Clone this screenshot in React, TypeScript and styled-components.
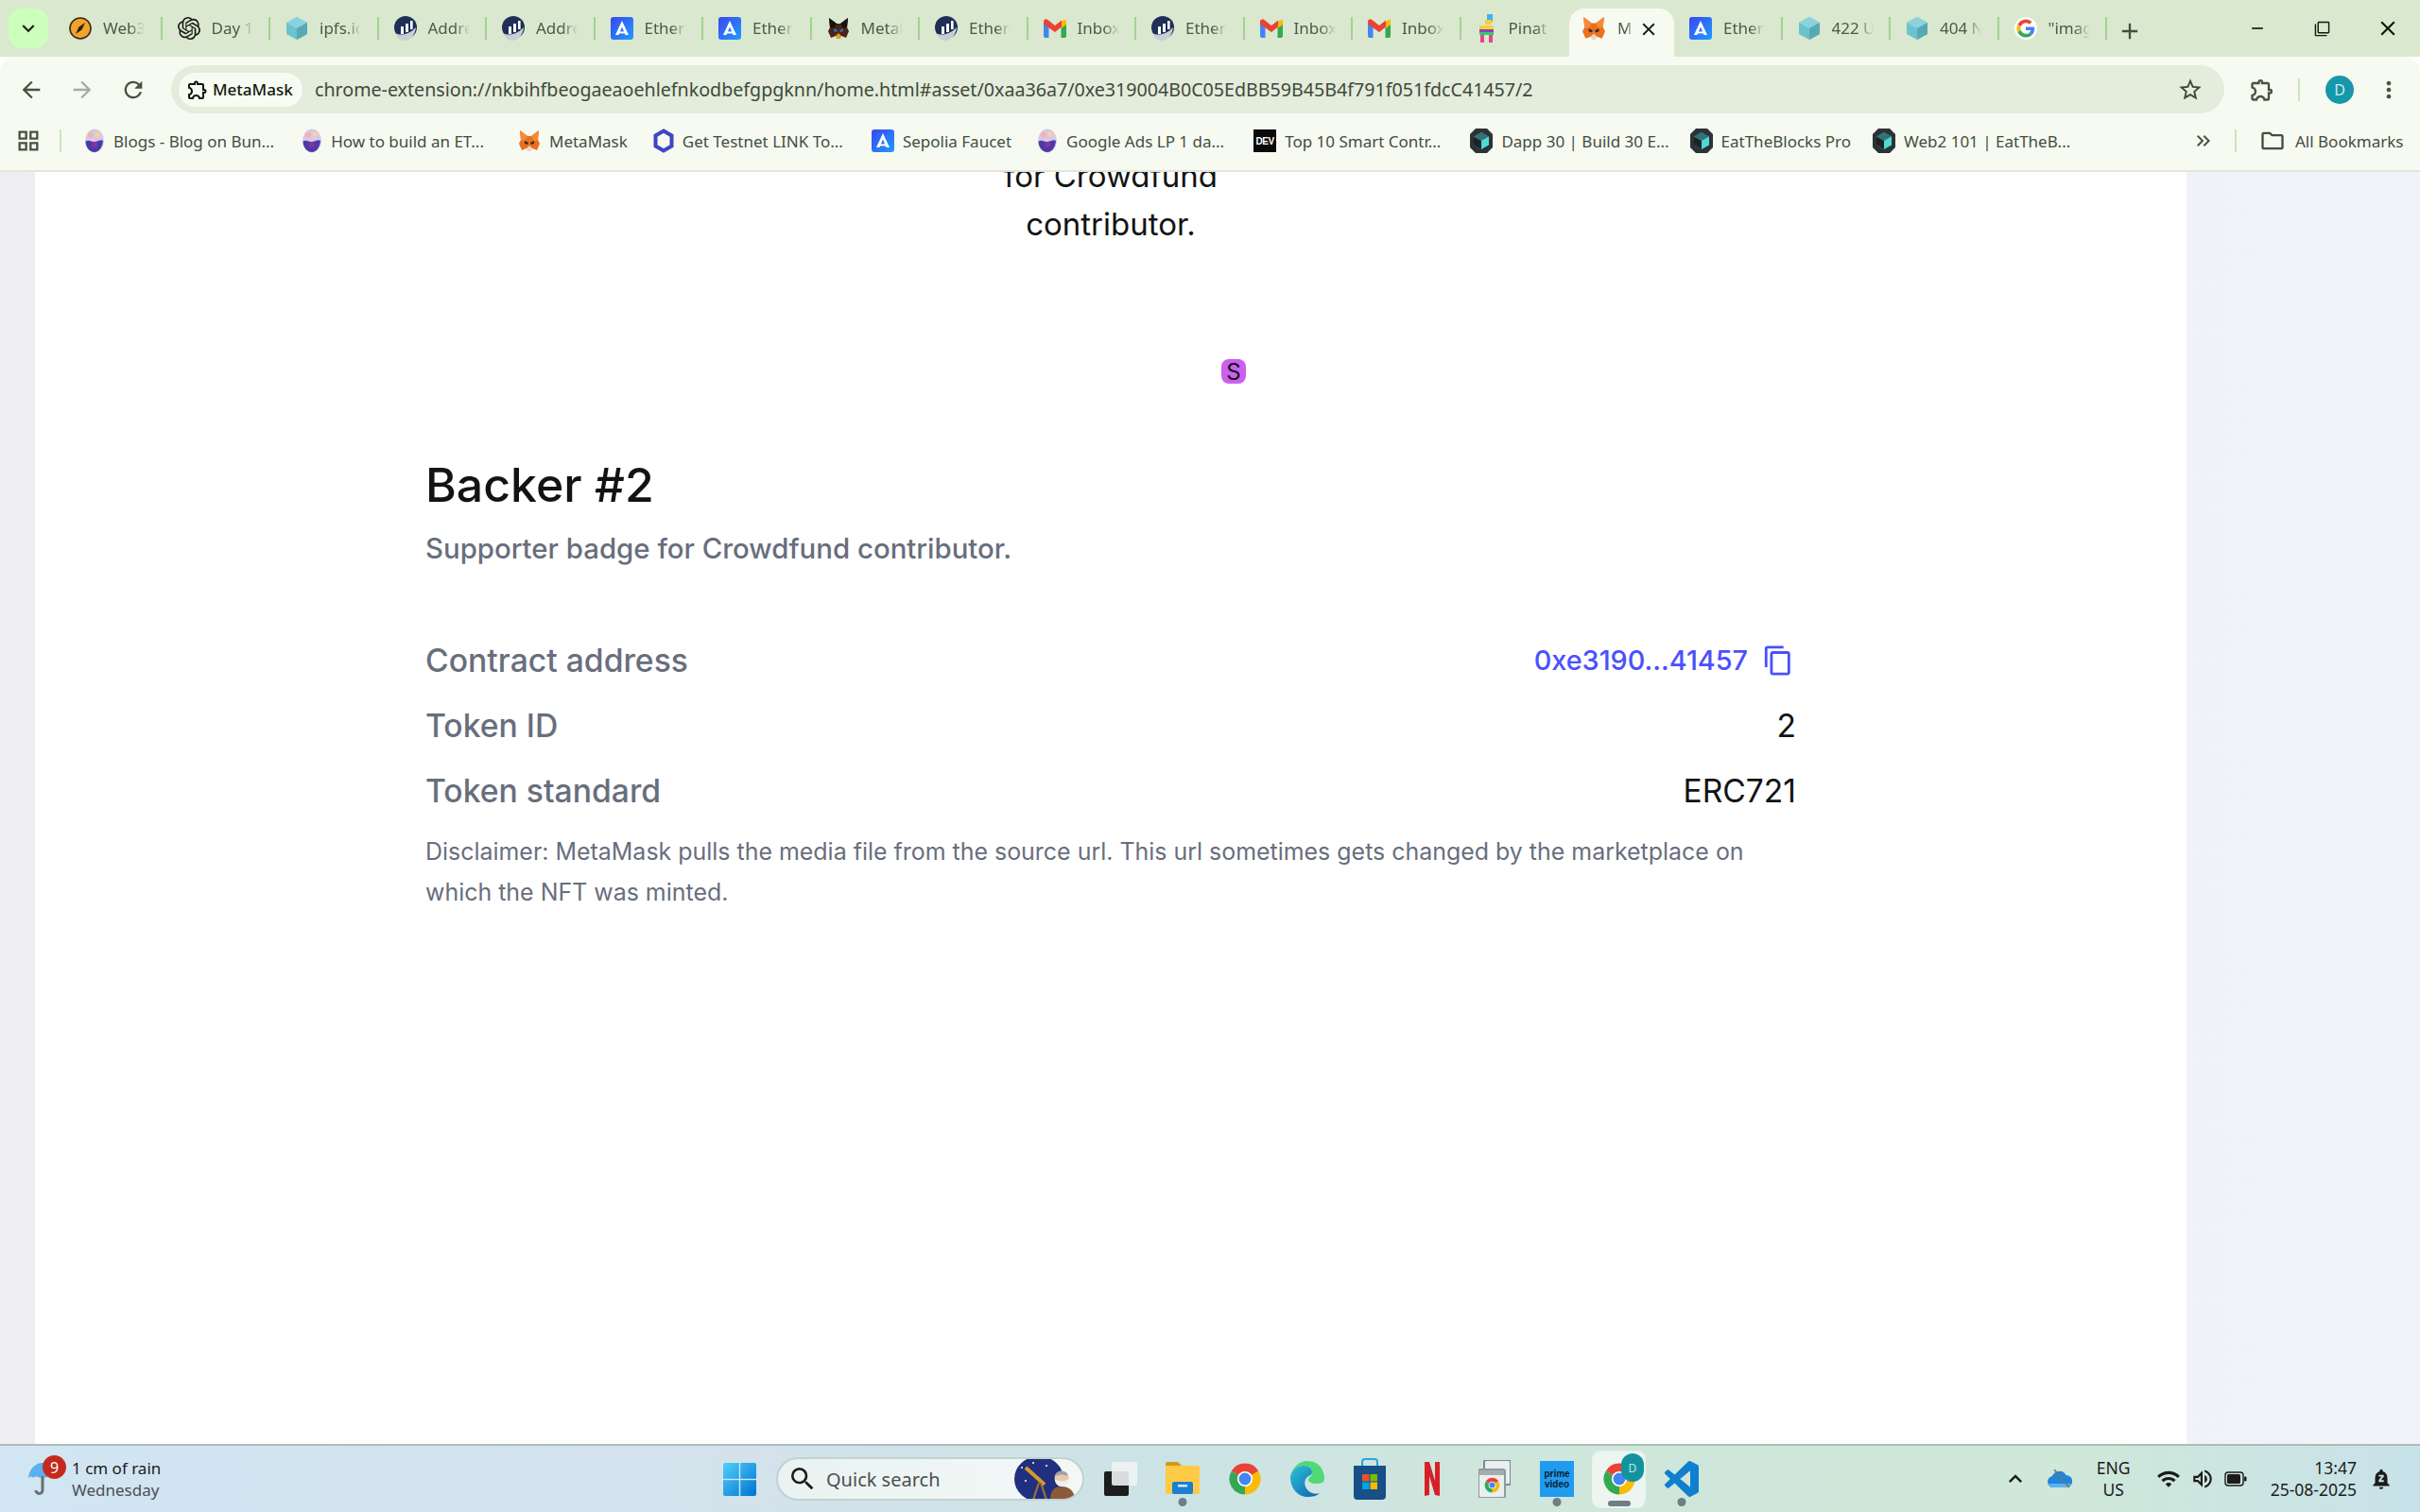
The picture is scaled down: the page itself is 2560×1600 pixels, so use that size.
import React from "react";
import styled, { createGlobalStyle } from "styled-components";
import {
  MdArrowBack,
  MdArrowForward,
  MdRefresh,
  MdStarBorder,
  MdOutlineExtension,
  MdMoreVert,
  MdOutlineContentCopy,
  MdNotificationsPaused,
  MdOutlineFolder,
  MdOutlineGridView,
  MdKeyboardDoubleArrowRight,
  MdKeyboardArrowDown,
  MdKeyboardArrowUp,
  MdAdd,
  MdClose,
  MdRemove,
  MdFilterNone,
  MdOutlineWifi,
  MdOutlineVolumeUp,
  MdSearch,
} from "react-icons/md";
import { SiOpenai } from "react-icons/si";

const GlobalStyle = createGlobalStyle`
  html, body {
    margin: 0;
    padding: 0;
    background: #ffffff;
  }
  * {
    box-sizing: border-box;
  }
`;

const Screen = styled.div`
  width: 2560px;
  height: 1600px;
  display: flex;
  flex-direction: column;
  overflow: hidden;
  font-family: "Noto Sans", sans-serif;
`;

/* ---------- tab strip ---------- */

const TabStrip = styled.div`
  height: 60px;
  flex: none;
  display: flex;
  align-items: flex-end;
  background: #d9e8cf;
  padding-left: 9px;
`;

const TabSearch = styled.div`
  width: 42px;
  height: 42px;
  margin: 0 6px 9px 0;
  border-radius: 14px;
  background: #ccffbb;
  color: #16200f;
  display: flex;
  align-items: center;
  justify-content: center;
`;

const Tab = styled.div<{ $active?: boolean; $sep?: boolean }>`
  width: ${({ $active }) => ($active ? "111px" : "114.5px")};
  height: 51px;
  flex: none;
  display: flex;
  align-items: center;
  gap: 12px;
  padding: 0 0 9px ${({ $active }) => ($active ? "13px" : "16px")};
  position: relative;
  border-radius: 16px 16px 0 0;
  background: ${({ $active }) => ($active ? "#f7faf1" : "transparent")};
  &::after {
    content: "";
    display: ${({ $active }) => ($active ? "none" : "block")};
    position: absolute;
    right: 0;
    top: 9px;
    width: 2px;
    height: 24px;
    background: ${({ $sep }) => ($sep === false ? "transparent" : "#a0d48d")};
  }
`;

const TabTitle = styled.span<{ $active?: boolean }>`
  width: ${({ $active }) => ($active ? "17px" : "46px")};
  white-space: nowrap;
  font-size: 17px;
  line-height: 24px;
  color: #4b5a47;
  -webkit-mask-image: linear-gradient(90deg, #000 60%, transparent 96%);
  mask-image: linear-gradient(90deg, #000 60%, transparent 96%);
`;

const TabClose = styled.span`
  position: absolute;
  right: 16px;
  top: 11px;
  color: #10170c;
  display: flex;
`;

const NewTab = styled.div`
  margin: 0 0 13px 10px;
  height: 28px;
  color: #43523f;
  display: flex;
`;

const WindowControls = styled.div`
  margin-left: auto;
  align-self: stretch;
  display: flex;
  color: #10170c;
`;

const WindowButton = styled.span`
  width: 69px;
  display: flex;
  align-items: center;
  justify-content: center;
`;

/* ---------- toolbar ---------- */

const Toolbar = styled.div`
  height: 60px;
  flex: none;
  display: flex;
  align-items: center;
  background: #f7faf1;
  border-radius: 16px 16px 0 0;
  padding-top: 9px;
`;

const NavButton = styled.div<{ $dim?: boolean }>`
  width: 54px;
  flex: none;
  display: flex;
  justify-content: center;
  color: ${({ $dim }) => ($dim ? "#a3ada0" : "#45533f")};
`;

const NavGroup = styled.div`
  display: flex;
  padding-left: 6px;
  width: 181px;
  flex: none;
`;

const Omnibox = styled.div`
  width: 2172px;
  height: 51px;
  flex: none;
  display: flex;
  align-items: center;
  border-radius: 26px;
  background: #e4ecdc;
  padding: 0 22px 0 8px;
`;

const SiteChip = styled.div`
  width: 131px;
  height: 36px;
  flex: none;
  display: flex;
  align-items: center;
  gap: 4px;
  padding-left: 8px;
  border-radius: 18px;
  background: #f8fbf2;
  font-size: 17px;
  font-weight: 500;
  color: #10170c;
`;

const UrlText = styled.span`
  margin-left: 13px;
  font-size: 19.65px;
  color: #3d4a39;
  white-space: nowrap;
`;

const StarSlot = styled.span`
  margin-left: auto;
  display: flex;
  color: #3b4937;
`;

const ExtSlot = styled.span`
  margin-left: 26px;
  display: flex;
  color: #45533f;
`;

const VSep = styled.span`
  width: 2px;
  height: 24px;
  flex: none;
  background: #c9e6bb;
`;

const ToolbarSep = styled(VSep)`
  margin-left: 24px;
`;

const Avatar = styled.span`
  width: 30px;
  height: 30px;
  margin-left: 27px;
  flex: none;
  border-radius: 50%;
  background: #1798aa;
  color: #cdeaf0;
  font-size: 16px;
  display: flex;
  align-items: center;
  justify-content: center;
`;

const MoreSlot = styled.span`
  margin-left: 23px;
  display: flex;
  color: #45533f;
`;

/* ---------- bookmarks ---------- */

const BookmarksBar = styled.div`
  height: 62px;
  flex: none;
  display: flex;
  align-items: center;
  background: #f7faf1;
  border-bottom: 2px solid #e1e5da;
  padding: 0 0 2px 16px;
  color: #45533f;
`;

const AppsSlot = styled.span`
  display: flex;
  width: 30px;
  color: #45533f;
`;

const BarSep = styled(VSep)`
  margin: 0 22px 0 17px;
`;

const BookmarkList = styled.div`
  display: flex;
  align-items: center;
  width: 2212px;
  flex: none;
`;

const Bookmark = styled.div<{ $lead?: number }>`
  display: flex;
  align-items: center;
  gap: 9px;
  margin-left: ${({ $lead }) => $lead ?? 0}px;
  font-size: 17px;
  color: #414e3d;
  white-space: nowrap;
`;

const OverflowSlot = styled.span`
  display: flex;
  margin-left: 20px;
  color: #45533f;
`;

const BarSepRight = styled(VSep)`
  margin: 0 24px 0 21px;
`;

const AllBookmarks = styled(Bookmark)`
  gap: 10px;
`;

const DevLogo = styled.span`
  width: 24px;
  height: 24px;
  flex: none;
  background: #0a0a0a;
  color: #ffffff;
  font-size: 10px;
  font-weight: 700;
  letter-spacing: -0.5px;
  display: flex;
  align-items: center;
  justify-content: center;
  font-family: "Liberation Sans", sans-serif;
`;

/* ---------- page ---------- */

const Viewport = styled.main`
  flex: 1;
  min-height: 0;
  display: flex;
  padding-left: 37px;
  overflow: hidden;
  background: linear-gradient(90deg, #eeeef2, #f1f3f8);
`;

const Panel = styled.div`
  width: 2276px;
  background: #ffffff;
  font-family: Inter, sans-serif;
`;

const Caption = styled.div`
  width: 300px;
  margin: -21px auto 0;
  font-size: 33px;
  line-height: 51px;
  text-align: center;
  color: #121314;
`;

const Details = styled.section`
  width: 1450px;
  margin: 0 auto;
`;

const BadgeRow = styled.div`
  margin-top: 117px;
  padding-left: 842px;
`;

const FallbackBadge = styled.span`
  width: 26px;
  height: 26px;
  border-radius: 8px;
  background: #cc5ff0;
  color: #121314;
  font-size: 24px;
  display: flex;
  align-items: center;
  justify-content: center;
`;

const Title = styled.h1`
  margin: 77px 0 0;
  font-size: 50px;
  line-height: 60px;
  font-weight: 500;
  color: #121314;
`;

const Subtitle = styled.p`
  margin: 18px 0 0;
  font-size: 29.4px;
  line-height: 40px;
  font-weight: 500;
  color: #686e7d;
`;

const Rows = styled.div`
  margin-top: 63px;
  display: flex;
  flex-direction: column;
`;

const Row = styled.div`
  height: 69px;
  display: flex;
  align-items: center;
  justify-content: space-between;
`;

const RowLabel = styled.span`
  font-size: 33.7px;
  font-weight: 500;
  color: #686e7d;
`;

const RowValue = styled.span`
  font-size: 33.6px;
  font-weight: 400;
  color: #121314;
`;

const AddressLink = styled.span`
  display: flex;
  align-items: center;
  gap: 15px;
  padding-right: 2px;
  font-size: 28.8px;
  font-weight: 500;
  color: #4a50ff;
`;

const Disclaimer = styled.p`
  margin: 9px 0 0;
  font-size: 24.95px;
  line-height: 43px;
  color: #686e7d;
`;

/* ---------- taskbar ---------- */

const Taskbar = styled.footer`
  height: 72px;
  flex: none;
  display: grid;
  grid-template-columns: 765px 1fr auto;
  align-items: center;
  border-top: 2px solid #adbcb9;
  background: linear-gradient(
    90deg,
    #d1e5f3 0%,
    #d4e2ec 30%,
    #cce3e6 48%,
    #cfe6dc 62%,
    #cfe8d8 85%,
    #c8e2ea 100%
  );
`;

const Weather = styled.div`
  display: flex;
  align-items: center;
  gap: 16px;
  padding-left: 30px;
`;

const WeatherIcon = styled.div`
  position: relative;
  width: 30px;
  height: 44px;
`;

const NoticeBadge = styled.span`
  position: absolute;
  left: 15px;
  top: -3px;
  width: 25px;
  height: 25px;
  border-radius: 50%;
  background: #c42b1c;
  color: #ffffff;
  font-size: 16px;
  display: flex;
  align-items: center;
  justify-content: center;
`;

const WeatherText = styled.div`
  display: flex;
  flex-direction: column;
  font-size: 17px;
  line-height: 23px;
  color: #1b1b1b;
`;

const MutedLine = styled.span`
  color: #4a4f52;
`;

const Dock = styled.div`
  display: flex;
  align-items: center;
`;

const SearchPill = styled.div`
  width: 326px;
  height: 46px;
  margin-left: 21px;
  margin-right: 5px;
  display: flex;
  align-items: center;
  gap: 9px;
  padding-left: 10px;
  border-radius: 23px;
  border: 2px solid #c3d1cf;
  background: linear-gradient(90deg, #e9f3f1, #f3f8f7);
  font-size: 20px;
  color: #4d4f50;
  overflow: hidden;
`;

const SearchThumb = styled.span`
  margin-left: auto;
  display: flex;
  margin-right: 6px;
`;

const DockSlot = styled.div<{ $active?: boolean; $running?: boolean }>`
  width: 66px;
  height: 70px;
  flex: none;
  display: flex;
  align-items: center;
  justify-content: center;
  position: relative;
  &::before {
    content: "";
    display: ${({ $active }) => ($active ? "block" : "none")};
    position: absolute;
    left: 5px;
    right: 6px;
    top: 6px;
    bottom: 5px;
    border-radius: 8px;
    background: rgba(255, 255, 255, 0.6);
    box-shadow: 0 0 0 1px rgba(255, 255, 255, 0.5);
  }
  &::after {
    content: "";
    display: ${({ $running, $active }) => ($running || $active ? "block" : "none")};
    position: absolute;
    bottom: 6px;
    left: 50%;
    transform: translateX(-50%);
    width: ${({ $active }) => ($active ? "24px" : "9px")};
    height: ${({ $active }) => ($active ? "6px" : "9px")};
    border-radius: 5px;
    background: #6f7d85;
  }
  & > * {
    position: relative;
  }
`;

const PrimeTile = styled.span`
  width: 36px;
  height: 38px;
  background: #1f9bf0;
  color: #0d1b2a;
  font-size: 10px;
  font-weight: 700;
  line-height: 11px;
  text-align: center;
  display: flex;
  flex-direction: column;
  justify-content: center;
  font-family: "Liberation Sans", sans-serif;
`;

const AvatarBubble = styled.span`
  position: absolute !important;
  right: 7px;
  top: 8px;
  width: 24px;
  height: 30px;
  border-radius: 12px;
  background: #12939f;
  color: #bfe6ea;
  font-size: 12px;
  display: flex;
  align-items: center;
  justify-content: center;
`;

const Tray = styled.div`
  display: flex;
  align-items: center;
  color: #1b1b1b;
  padding-right: 28px;
`;

const TrayIcon = styled.span<{ $gap: number }>`
  display: flex;
  margin-left: ${({ $gap }) => $gap}px;
`;

const LangBlock = styled.div`
  margin-left: 19px;
  width: 50px;
  text-align: center;
  font-size: 17.5px;
  line-height: 23px;
`;

const Clock = styled.div`
  margin-left: 25px;
  text-align: right;
  font-size: 17.5px;
  line-height: 23px;
`;

/* ---------- little drawings ---------- */

const Fox = ({ size = 24, dark = false }: { size?: number; dark?: boolean }) => (
  <svg width={size} height={size} viewBox="0 0 24 24">
    <polygon points="2,1 10,7 14,7 22,1 21,11 23,15 20,22 15,20 9,20 4,22 1,15 3,11" fill={dark ? "#4a2417" : "#e8701f"} />
    <polygon points="7,12 11,14 10,16 7,15" fill={dark ? "#2f6fbf" : "#3a2a1e"} />
    <polygon points="17,12 13,14 14,16 17,15" fill={dark ? "#2f6fbf" : "#3a2a1e"} />
    <polygon points="9,20 12,17 15,20 14,23 10,23" fill={dark ? "#d7a21f" : "#e9d7c5"} />
    <polygon points="2,1 10,7 7,12 3,11" fill={dark ? "#18120f" : "#f58a3a"} />
    <polygon points="22,1 14,7 17,12 21,11" fill={dark ? "#18120f" : "#f58a3a"} />
  </svg>
);

const Compass = () => (
  <svg width="24" height="24" viewBox="0 0 24 24">
    <circle cx="12" cy="12" r="11" fill="#f2a32c" stroke="#3a2a14" strokeWidth="1.6" />
    <polygon points="17,6 13.5,13.5 7,18 10.5,10.5" fill="#2a2118" />
  </svg>
);

const Cube = ({ tone = "#6cc3cf" }: { tone?: string }) => (
  <svg width="24" height="26" viewBox="0 0 24 26">
    <polygon points="12,1 23,7 23,19 12,25 1,19 1,7" fill={tone} />
    <polygon points="12,1 23,7 12,13 1,7" fill="#8bd3dc" />
    <polygon points="12,13 23,7 23,19 12,25" fill="#57a9b6" />
  </svg>
);

const ChartGlobe = () => (
  <svg width="24" height="26" viewBox="0 0 24 26">
    <circle cx="12" cy="12" r="12" fill="#1f2f57" />
    <path d="M1 18c6 3 14 2 22-6-1 9-7 14-12 14-4 0-8-3-10-8z" fill="#c8ced6" />
    <rect x="7" y="11" width="3" height="8" fill="#ffffff" />
    <rect x="12" y="8" width="3" height="9" fill="#ffffff" />
    <rect x="17" y="5" width="2.6" height="9" fill="#ffffff" />
  </svg>
);

const BlueA = ({ size = 24 }: { size?: number }) => (
  <svg width={size} height={size} viewBox="0 0 24 24">
    <defs>
      <linearGradient id="blueA" x1="0" y1="0" x2="1" y2="1">
        <stop offset="0" stopColor="#3c46f0" />
        <stop offset="1" stopColor="#1e9cff" />
      </linearGradient>
    </defs>
    <rect width="24" height="24" rx="3" fill="url(#blueA)" />
    <path d="M12 4l7 15h-3.4L12 10.6 8.4 19H5z" fill="#ffffff" />
    <rect x="8" y="15.4" width="8" height="2" fill="#ffffff" />
  </svg>
);

const Gmail = () => (
  <svg width="24" height="20" viewBox="0 0 24 20">
    <path d="M0 3v15a2 2 0 0 0 2 2h3.5V8.5z" fill="#4285f4" />
    <path d="M24 3v15a2 2 0 0 1-2 2h-3.5V8.5z" fill="#34a853" />
    <path d="M18.5 2.5L24 0.5V6l-5.5 4z" fill="#fbbc04" />
    <path d="M0 3c0-2.5 2.6-3.6 4.5-2L12 7l7-5.5 0 7L12 14 0 5.5z" fill="#ea4335" />
  </svg>
);

const Pinata = () => (
  <svg width="22" height="32" viewBox="0 0 22 32">
    <rect x="11" y="1" width="6" height="8" fill="#3db4f2" />
    <rect x="9" y="7" width="7" height="5" fill="#f4d03f" />
    <rect x="3" y="13" width="15" height="4" fill="#f4d03f" />
    <rect x="3" y="17" width="15" height="3" fill="#8e44ad" />
    <rect x="3" y="20" width="15" height="3" fill="#2ecc71" />
    <rect x="4" y="23" width="4" height="8" fill="#e84393" />
    <rect x="13" y="23" width="4" height="8" fill="#e84393" />
  </svg>
);

const GoogleG = () => (
  <svg width="24" height="24" viewBox="-6 -6 60 60">
    <circle cx="24" cy="24" r="30" fill="#ffffff" />
    <path fill="#EA4335" d="M24 9.5c3.54 0 6.71 1.22 9.21 3.6l6.85-6.85C35.9 2.38 30.47 0 24 0 14.62 0 6.51 5.38 2.56 13.22l7.98 6.19C12.43 13.72 17.74 9.5 24 9.5z" />
    <path fill="#4285F4" d="M46.98 24.55c0-1.57-.15-3.09-.38-4.55H24v9.02h12.94c-.58 2.96-2.26 5.48-4.78 7.18l7.73 6c4.51-4.18 7.09-10.36 7.09-17.65z" />
    <path fill="#FBBC05" d="M10.53 28.59c-.48-1.45-.76-2.99-.76-4.59s.27-3.14.76-4.59l-7.98-6.19C.92 16.46 0 20.12 0 24c0 3.88.92 7.54 2.56 10.78l7.97-6.19z" />
    <path fill="#34A853" d="M24 48c6.48 0 11.93-2.13 15.89-5.81l-7.73-6c-2.15 1.45-4.92 2.3-8.16 2.3-6.26 0-11.57-4.22-13.47-9.91l-7.98 6.19C6.51 42.62 14.62 48 24 48z" />
  </svg>
);

const Opal = () => (
  <svg width="22" height="26" viewBox="0 0 22 26">
    <ellipse cx="11" cy="13" rx="10" ry="12.5" fill="#d8c7e6" />
    <path d="M1.5 14c4-3 6 1 10 0s6-3 8.5-1c-.5 7-4.500 12-9 12S2 21 1.500 14z" fill="#4a3ba8" />
    <circle cx="7" cy="7" r="3" fill="#f0b3b3" />
    <circle cx="14" cy="6" r="2.500" fill="#f2d98a" />
    <circle cx="11" cy="17" r="3" fill="#8e2f9e" />
  </svg>
);

const ChainHex = () => (
  <svg width="22" height="26" viewBox="0 0 22 26">
    <polygon points="11,2.500 19.500,7.500 19.500,18.500 11,23.500 2.500,18.500 2.500,7.500" fill="none" stroke="#3f46c4" strokeWidth="4" />
  </svg>
);

const BlocksHex = () => (
  <svg width="24" height="28" viewBox="0 0 24 28">
    <path d="M6 1h12l6 6v14l-6 6H6l-6-6V7z" fill="#2c3236" />
    <polygon points="12,5 20,9.500 20,18.500 12,23 4,18.500 4,9.500" fill="#4fd8d8" />
    <polygon points="12,14 20,9.500 12,5 4,9.500" fill="#1c2226" opacity="0.55" />
    <polygon points="12,14 12,23 4,18.500 4,9.500" fill="#1c2226" />
  </svg>
);

const ChromeLogo = ({ size = 36 }: { size?: number }) => (
  <svg width={size} height={size} viewBox="0 0 24 24">
    <path fill="#EA4335" d="M12 12 L2.47 6.500 A11 11 0 0 1 21.530 6.500 Z" />
    <path fill="#FBBC05" d="M12 12 L21.530 6.500 A11 11 0 0 1 12 23 Z" />
    <path fill="#34A853" d="M12 12 L12 23 A11 11 0 0 1 2.470 6.500 Z" />
    <circle cx="12" cy="12" r="5.400" fill="#ffffff" />
    <circle cx="12" cy="12" r="4.300" fill="#4285F4" />
  </svg>
);

const WindowsLogo = () => (
  <svg width="35" height="35" viewBox="0 0 35 35">
    <defs>
      <linearGradient id="winLogo" x1="0" y1="0" x2="1" y2="1">
        <stop offset="0" stopColor="#4fd0fb" />
        <stop offset="1" stopColor="#0072d0" />
      </linearGradient>
    </defs>
    <rect width="35" height="35" rx="2" fill="url(#winLogo)" />
    <rect x="16.800" width="1.400" height="35" fill="#d3e5ee" />
    <rect y="16.800" width="35" height="1.400" fill="#d3e5ee" />
  </svg>
);

const TaskView = () => (
  <svg width="37" height="36" viewBox="0 0 37 36">
    <rect x="1" y="10" width="26" height="26" rx="2" fill="#1d1d1d" />
    <rect x="9" y="0" width="27" height="25" rx="2" fill="#f0f3f3" opacity="0.9" />
  </svg>
);

const FolderLogo = () => (
  <svg width="36" height="36" viewBox="0 0 36 36">
    <path d="M0 2a2 2 0 0 1 2-2h11l4 4h-17z" fill="#d39a16" />
    <rect y="4" width="36" height="30" rx="1.500" fill="#ffcb47" />
    <rect x="7" y="21" width="22" height="13" rx="2" fill="#1d7fd1" />
    <rect x="13" y="24" width="10" height="2.500" fill="#cfe8fa" />
  </svg>
);

const EdgeLogo = () => (
  <svg width="36" height="38" viewBox="0 0 36 38">
    <defs>
      <linearGradient id="edgeA" x1="0" y1="0" x2="1" y2="1">
        <stop offset="0" stopColor="#2bc4d8" />
        <stop offset="1" stopColor="#0f5fb0" />
      </linearGradient>
    </defs>
    <path d="M18 0C30 0 36 9 36 19c0 3-3 5-8 5-6 0-9-2-9-4 0-3 4-3 4-8 0-4-4-7-9-7C7 5 1 10 0 16 2 7 9 0 18 0z" fill="#4fd977" />
    <path d="M0 17C1 9 8 5 14 5c5 0 9 3 9 7 0 3-3 3-6 6-4 5-1 13 6 16 3 1 6 1 8 0-3 3-8 4-13 4C8 38 0 29 0 17z" fill="url(#edgeA)" />
  </svg>
);

const StoreLogo = () => (
  <svg width="36" height="44" viewBox="0 0 36 44">
    <path d="M10 8V4a3 3 0 0 1 3-3h10a3 3 0 0 1 3 3v4" fill="none" stroke="#23a7e0" strokeWidth="2" />
    <path d="M1 8h34v32a4 4 0 0 1-4 4H5a4 4 0 0 1-4-4z" fill="#174f87" />
    <rect x="10" y="17" width="7.500" height="7.500" fill="#e8532b" />
    <rect x="18.500" y="17" width="7.500" height="7.500" fill="#7fba00" />
    <rect x="10" y="25.500" width="7.500" height="7.500" fill="#00a4ef" />
    <rect x="18.500" y="25.500" width="7.500" height="7.500" fill="#ffb900" />
  </svg>
);

const NetflixLogo = () => (
  <svg width="16" height="36" viewBox="0 0 16 36">
    <path d="M0 0h5l6 20V0h5v36l-5-1L5 15v20l-5 1z" fill="#d81f26" />
  </svg>
);

const SnapLogo = () => (
  <svg width="34" height="40" viewBox="0 0 34 40">
    <rect x="6" y="0" width="28" height="26" rx="2" fill="#e9eef0" stroke="#7d8a8f" strokeWidth="2" />
    <rect x="0" y="10" width="28" height="30" rx="2" fill="#e9eef0" stroke="#8f9a9e" strokeWidth="2" />
    <rect x="1" y="11" width="26" height="5" fill="#a4aeb2" />
    <g transform="translate(6 18)">
      <ChromeLogo size={17} />
    </g>
  </svg>
);

const VsCodeLogo = () => (
  <svg width="36" height="38" viewBox="0 0 24 24" preserveAspectRatio="none">
    <path
      fill="#0f7fcf"
      d="M23.15 2.587L18.21.21a1.494 1.494 0 0 0-1.705.29l-9.46 8.63-4.12-3.128a.999.999 0 0 0-1.276.057L.327 7.261A1 1 0 0 0 .326 8.74L3.899 12 .326 15.26a1 1 0 0 0 .001 1.479L1.65 17.94a.999.999 0 0 0 1.276.057l4.12-3.128 9.46 8.63a1.492 1.492 0 0 0 1.704.29l4.942-2.377A1.5 1.500 0 0 0 24 20.060V3.939a1.500 1.500 0 0 0-.85-1.352zm-5.146 14.861L10.826 12l7.178-5.448v10.896z"
    />
  </svg>
);

const Umbrella = () => (
  <svg width="30" height="40" viewBox="0 0 30 40">
    <path d="M0 21C1 11 8 5 15 5s14 6 15 16c-2-2-4-2-5 0-2-2-5-2-7 0-2-2-4-2-6 0-2-2-5-2-7 0-1-2-3-2-5 0z" fill="#5ab0f0" />
    <path d="M15 19v15a3.500 3.500 0 0 1-7 0" fill="none" stroke="#6b6f73" strokeWidth="3" />
  </svg>
);

const SearchPicture = () => (
  <svg width="70" height="44" viewBox="0 0 70 44">
    <ellipse cx="30" cy="22" rx="26" ry="24" fill="#20307f" />
    <circle cx="12" cy="10" r="1" fill="#ffffff" />
    <circle cx="24" cy="5" r="1" fill="#ffffff" />
    <circle cx="38" cy="8" r="1" fill="#ffffff" />
    <circle cx="16" cy="24" r="1" fill="#ffffff" />
    <path d="M16 10L36 28" stroke="#d69a2c" strokeWidth="4" />
    <path d="M30 26l-6 18M32 26l6 18" stroke="#a8742a" strokeWidth="2" />
    <path d="M42 44c0-9 4-14 12-14s14 5 14 14z" fill="#8a5a3a" />
    <circle cx="54" cy="21" r="7.500" fill="#e8c8a8" />
    <path d="M47 24c2 8 12 8 14 0v-2c-3 3-11 3-14 0z" fill="#eceff2" />
    <path d="M47 19c1-7 13-7 14 0-4-2-10-2-14 0z" fill="#9aa0a6" />
  </svg>
);

const Cloud = () => (
  <svg width="26" height="20" viewBox="0 0 26 20">
    <path d="M6 19a6 6 0 0 1-1-11.900A8 8 0 0 1 19.500 6 6.500 6.500 0 0 1 20 19z" fill="#1f86d8" />
    <path d="M1 15a6 6 0 0 0 5 4h14a6 6 0 0 0 5-4z" fill="#5cb1ee" />
    <path d="M7 0L23 19" stroke="#6e7478" strokeWidth="1.600" />
  </svg>
);

const Battery = () => (
  <svg width="24" height="16" viewBox="0 0 24 16">
    <rect x="1" y="1" width="19" height="14" rx="3" fill="none" stroke="#1b1b1b" strokeWidth="1.400" />
    <rect x="3" y="3" width="14" height="10" rx="1.500" fill="#1b1b1b" />
    <rect x="21" y="5.500" width="2.500" height="5" rx="1" fill="#1b1b1b" />
  </svg>
);

/* ---------- data ---------- */

const tabs: { title: string; icon: React.ReactNode }[] = [
  { title: "Web3", icon: <Compass /> },
  { title: "Day 1", icon: <SiOpenai size={24} color="#16160f" /> },
  { title: "ipfs.io", icon: <Cube /> },
  { title: "Addre", icon: <ChartGlobe /> },
  { title: "Addre", icon: <ChartGlobe /> },
  { title: "Ether", icon: <BlueA /> },
  { title: "Ether", icon: <BlueA /> },
  { title: "Metal", icon: <Fox dark /> },
  { title: "Ether", icon: <ChartGlobe /> },
  { title: "Inbox", icon: <Gmail /> },
  { title: "Ether", icon: <ChartGlobe /> },
  { title: "Inbox", icon: <Gmail /> },
  { title: "Inbox", icon: <Gmail /> },
  { title: "Pinat", icon: <Pinata /> },
];

const tabsAfter: { title: string; icon: React.ReactNode }[] = [
  { title: "Ether", icon: <BlueA /> },
  { title: "422 U", icon: <Cube /> },
  { title: "404 N", icon: <Cube /> },
  { title: "\"imag", icon: <GoogleG /> },
];

// lead is the space before each bookmark, chrome's varies with the truncated title
const bookmarks: { title: string; icon: React.ReactNode; lead: number }[] = [
  { title: "Blogs - Blog on Bun...", icon: <Opal />, lead: 2 },
  { title: "How to build an ET...", icon: <Opal />, lead: 29 },
  { title: "MetaMask", icon: <Fox />, lead: 36 },
  { title: "Get Testnet LINK To...", icon: <ChainHex />, lead: 27 },
  { title: "Sepolia Faucet", icon: <BlueA />, lead: 30 },
  { title: "Google Ads LP 1 da...", icon: <Opal />, lead: 27 },
  { title: "Top 10 Smart Contr...", icon: <DevLogo>DEV</DevLogo>, lead: 31 },
  { title: "Dapp 30 | Build 30 E...", icon: <BlocksHex />, lead: 31 },
  { title: "EatTheBlocks Pro", icon: <BlocksHex />, lead: 22 },
  { title: "Web2 101 | EatTheB...", icon: <BlocksHex />, lead: 23 },
];

const rows = [
  { label: "Token ID", value: "2" },
  { label: "Token standard", value: "ERC721" },
];

const App: React.FC = () => {
  return (
    <Screen>
      <GlobalStyle />
      <TabStrip>
        <TabSearch>
          <MdKeyboardArrowDown size={26} />
        </TabSearch>
        {tabs.map(({ title, icon }, i) => (
          <Tab key={i} $sep={i !== tabs.length - 1}>
            {icon}
            <TabTitle>{title}</TabTitle>
          </Tab>
        ))}
        <Tab $active>
          <Fox size={26} />
          <TabTitle $active>M</TabTitle>
          <TabClose>
            <MdClose size={22} />
          </TabClose>
        </Tab>
        {tabsAfter.map(({ title, icon }, i) => (
          <Tab key={i}>
            {icon}
            <TabTitle>{title}</TabTitle>
          </Tab>
        ))}
        <NewTab>
          <MdAdd size={28} />
        </NewTab>
        <WindowControls>
          <WindowButton>
            <MdRemove size={20} />
          </WindowButton>
          <WindowButton>
            <MdFilterNone size={17} />
          </WindowButton>
          <WindowButton>
            <MdClose size={26} />
          </WindowButton>
        </WindowControls>
      </TabStrip>

      <Toolbar>
        <NavGroup>
          <NavButton>
            <MdArrowBack size={28} />
          </NavButton>
          <NavButton $dim>
            <MdArrowForward size={28} />
          </NavButton>
          <NavButton>
            <MdRefresh size={28} />
          </NavButton>
        </NavGroup>
        <Omnibox>
          <SiteChip>
            <MdOutlineExtension size={24} />
            MetaMask
          </SiteChip>
          <UrlText>
            chrome-extension://nkbihfbeogaeaoehlefnkodbefgpgknn/home.html#asset/0xaa36a7/0xe319004B0C05EdBB59B45B4f791f051fdcC41457/2
          </UrlText>
          <StarSlot>
            <MdStarBorder size={28} />
          </StarSlot>
        </Omnibox>
        <ExtSlot>
          <MdOutlineExtension size={28} />
        </ExtSlot>
        <ToolbarSep />
        <Avatar>D</Avatar>
        <MoreSlot>
          <MdMoreVert size={28} />
        </MoreSlot>
      </Toolbar>

      <BookmarksBar>
        <AppsSlot>
          <MdOutlineGridView size={28} />
        </AppsSlot>
        <BarSep />
        <BookmarkList>
          {bookmarks.map(({ title, icon, lead }) => (
            <Bookmark key={title} $lead={lead}>
              {icon}
              {title}
            </Bookmark>
          ))}
        </BookmarkList>
        <OverflowSlot>
          <MdKeyboardDoubleArrowRight size={24} />
        </OverflowSlot>
        <BarSepRight />
        <AllBookmarks>
          <MdOutlineFolder size={28} />
          All Bookmarks
        </AllBookmarks>
      </BookmarksBar>

      <Viewport>
        <Panel>
          <Caption>for Crowdfund contributor.</Caption>
          <Details>
            <BadgeRow>
              <FallbackBadge>S</FallbackBadge>
            </BadgeRow>
            <Title>Backer #2</Title>
            <Subtitle>Supporter badge for Crowdfund contributor.</Subtitle>
            <Rows>
              <Row>
                <RowLabel>Contract address</RowLabel>
                <AddressLink>
                  0xe3190...41457
                  <MdOutlineContentCopy size={34} />
                </AddressLink>
              </Row>
              {rows.map(({ label, value }) => (
                <Row key={label}>
                  <RowLabel>{label}</RowLabel>
                  <RowValue>{value}</RowValue>
                </Row>
              ))}
            </Rows>
            <Disclaimer>
              Disclaimer: MetaMask pulls the media file from the source url. This url sometimes gets changed by the
              marketplace on which the NFT was minted.
            </Disclaimer>
          </Details>
        </Panel>
      </Viewport>

      <Taskbar>
        <Weather>
          <WeatherIcon>
            <Umbrella />
            <NoticeBadge>9</NoticeBadge>
          </WeatherIcon>
          <WeatherText>
            <span>1 cm of rain</span>
            <MutedLine>Wednesday</MutedLine>
          </WeatherText>
        </Weather>
        <Dock>
          <WindowsLogo />
          <SearchPill>
            <MdSearch size={32} color="#1b1b1b" />
            Quick search
            <SearchThumb>
              <SearchPicture />
            </SearchThumb>
          </SearchPill>
          <DockSlot>
            <TaskView />
          </DockSlot>
          <DockSlot $running>
            <FolderLogo />
          </DockSlot>
          <DockSlot>
            <ChromeLogo />
          </DockSlot>
          <DockSlot>
            <EdgeLogo />
          </DockSlot>
          <DockSlot>
            <StoreLogo />
          </DockSlot>
          <DockSlot>
            <NetflixLogo />
          </DockSlot>
          <DockSlot>
            <SnapLogo />
          </DockSlot>
          <DockSlot $running>
            <PrimeTile>
              <span>prime</span>
              <span>video</span>
            </PrimeTile>
          </DockSlot>
          <DockSlot $active>
            <ChromeLogo />
            <AvatarBubble>D</AvatarBubble>
          </DockSlot>
          <DockSlot $running>
            <VsCodeLogo />
          </DockSlot>
        </Dock>
        <Tray>
          <TrayIcon $gap={0}>
            <MdKeyboardArrowUp size={28} />
          </TrayIcon>
          <TrayIcon $gap={20}>
            <Cloud />
          </TrayIcon>
          <LangBlock>
            <div>ENG</div>
            <div>US</div>
          </LangBlock>
          <TrayIcon $gap={20}>
            <MdOutlineWifi size={26} />
          </TrayIcon>
          <TrayIcon $gap={10}>
            <MdOutlineVolumeUp size={26} />
          </TrayIcon>
          <TrayIcon $gap={10}>
            <Battery />
          </TrayIcon>
          <Clock>
            <div>13:47</div>
            <div>25-08-2025</div>
          </Clock>
          <TrayIcon $gap={13}>
            <MdNotificationsPaused size={26} />
          </TrayIcon>
        </Tray>
      </Taskbar>
    </Screen>
  );
};

export default App;
